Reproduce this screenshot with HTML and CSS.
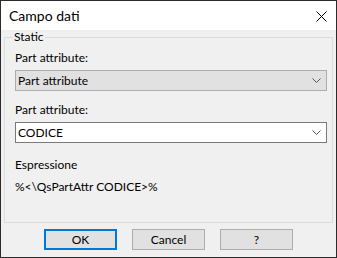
FILE: index.html
```html
<!DOCTYPE html>
<html>
<head>
<meta charset="utf-8">
<link rel="stylesheet" href="styles.css">
</head>
<body>
<div class="window">
  <div class="titlebar">
    <span class="title">Campo dati</span>
    <span class="close"><svg width="11" height="11" viewBox="0 0 11 11"><path d="M0.5 0.5 L10.5 10.5 M10.5 0.5 L0.5 10.5" stroke="#000" stroke-width="1" fill="none"/></svg></span>
  </div>
  <div class="client">
    <fieldset class="group">
      <legend class="legend">Static</legend>
      <div class="label first">Part attribute:</div>
      <div class="combo combo-disabled"><span class="combo-text">Part attribute</span><svg class="chev" width="9" height="5" viewBox="0 0 9 5"><path d="M0.5 0.5 L4.5 4.5 L8.5 0.5" stroke="#555" fill="none"/></svg></div>
      <div class="label second">Part attribute:</div>
      <div class="combo combo-active"><span class="combo-text">CODICE</span><svg class="chev" width="9" height="5" viewBox="0 0 9 5"><path d="M0.5 0.5 L4.5 4.5 L8.5 0.5" stroke="#555" fill="none"/></svg></div>
      <div class="label third">Espressione</div>
      <div class="label expr">%&lt;\QsPartAttr CODICE&gt;%</div>
    </fieldset>
    <div class="buttons">
      <button class="btn btn-default">OK</button>
      <button class="btn">Cancel</button>
      <button class="btn">?</button>
    </div>
  </div>
</div>
</body>
</html>
```
FILE: styles.css
```css
* { box-sizing: border-box; }
html, body { margin: 0; padding: 0; background: #f0f0f0; }
body { font-family: Lato, "Liberation Sans", sans-serif; font-size: 12px; color: #000; }
.window {
  width: 337px; height: 258px;
  border: 1px solid #2b2b2b;
  background: #f0f0f0;
  display: flex; flex-direction: column;
}
.titlebar {
  height: 29px; background: #fff;
  display: flex; align-items: center; justify-content: space-between;
  padding: 0 9px 0 8px;
}
.title { font-size: 14px; line-height: 16px; }
.close { display: flex; width: 11px; height: 11px; margin-top: 1px; }
.client { flex: 1; padding: 0 3px; display: flex; flex-direction: column; }
.group {
  margin: 0; border: 1px solid #dcdcdc;
  padding: 0 5px 28px 10px;
  display: flex; flex-direction: column;
}
.legend { padding: 0 1px; margin-left: -2px; line-height: 14px; }
.label { line-height: 15px; height: 15px; }
.first { margin-top: 6px; }
.second { margin-top: 11px; }
.third { margin-top: 14px; }
.expr { margin-top: 7px; }
.combo {
  height: 21px; margin-top: 5px;
  display: flex; align-items: center; justify-content: space-between;
  padding: 0 5px 0 2px;
}
.combo-disabled { background: #e1e1e1; border: 1px solid #adadad; }
.combo-active { background: #fff; border: 1px solid #7a7a7a; }
.combo-text { line-height: 15px; }
.chev { display: block; }
.buttons { display: flex; gap: 15px; padding-left: 40px; margin-top: 6px; }
.btn {
  width: 73px; height: 21px;
  background: #e1e1e1; border: 1px solid #adadad;
  font-family: inherit; font-size: 12px; color: #000;
  padding: 0; margin: 0;
}
.btn-default { border: 2px solid #0078d7; }
```
